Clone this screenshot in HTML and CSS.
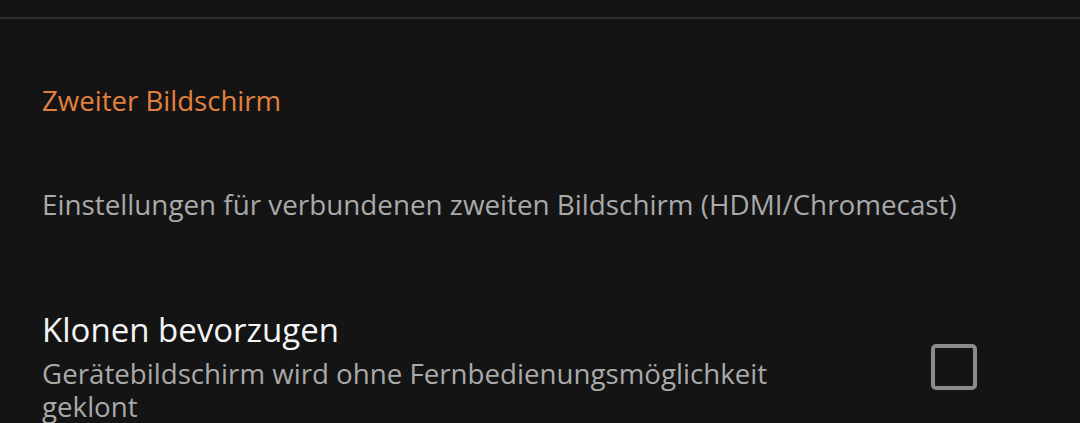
FILE: index.html
```html
<!DOCTYPE html>
<html lang="de">
<head>
<meta charset="utf-8">
<link rel="stylesheet" href="styles.css">
</head>
<body>
<div class="screen">
  <div class="divider"></div>
  <div class="category">Zweiter Bildschirm</div>
  <div class="info">Einstellungen für verbundenen zweiten Bildschirm (HDMI/Chromecast)</div>
  <div class="pref">
    <div class="pref-text">
      <div class="pref-title">Klonen bevorzugen</div>
      <div class="pref-summary">Gerätebildschirm wird ohne Fernbedienungsmöglichkeit geklont</div>
    </div>
    <div class="pref-widget"><span class="checkbox"></span></div>
  </div>
</div>
</body>
</html>
```
FILE: styles.css
```css
html, body {
  margin: 0;
  padding: 0;
  background: #141414;
}
.screen {
  width: 1080px;
  height: 423px;
  overflow: hidden;
  font-family: "Open Sans", "Noto Sans", sans-serif;
  padding-top: 17px;
  box-sizing: border-box;
}
.divider {
  height: 2px;
  background: #2d2d2d;
}
.category {
  margin-top: 61px;
  padding-left: 42px;
  font-size: 27.6px;
  line-height: 40px;
  color: #e2813d;
}
.info {
  margin-top: 64px;
  padding-left: 42px;
  font-size: 27.8px;
  line-height: 40px;
  color: #a9a9a9;
}
.pref {
  margin-top: 84px;
  display: flex;
  align-items: flex-start;
}
.pref-text {
  padding-left: 42px;
  width: 760px;
}
.pref-title {
  font-size: 33px;
  line-height: 44px;
  color: #f4f4f4;
}
.pref-summary {
  margin-top: 5px;
  font-size: 27.7px;
  line-height: 33px;
  color: #a9a9a9;
}
.pref-widget {
  margin-left: 129px;
  padding-top: 36px;
}
.checkbox {
  display: block;
  width: 38px;
  height: 38px;
  border: 4px solid #8b8b8b;
  border-radius: 5px;
}
```
